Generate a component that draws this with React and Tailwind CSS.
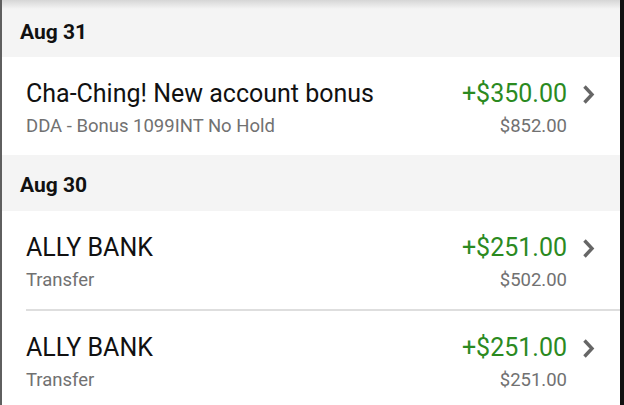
const days = [
  {
    date: "Aug 31",
    items: [
      {
        title: "Cha-Ching! New account bonus",
        sub: "DDA - Bonus 1099INT No Hold",
        amount: "+$350.00",
        balance: "$852.00",
      },
    ],
  },
  {
    date: "Aug 30",
    items: [
      { title: "ALLY BANK", sub: "Transfer", amount: "+$251.00", balance: "$502.00" },
      { title: "ALLY BANK", sub: "Transfer", amount: "+$251.00", balance: "$251.00" },
    ],
  },
];

const Chevron = () => (
  <svg width="13" height="21" viewBox="0 0 13 21" className="shrink-0">
    <path d="M2.5 2.5 L10 10.5 L2.5 18.5" fill="none" stroke="#666" strokeWidth="3.4" />
  </svg>
);

const App = () => {
  return (
    <div
      className="w-[624px] h-[405px] overflow-hidden bg-white border-l-2 border-l-[#5f5f5f] border-r-4 border-r-[#111]"
      style={{ fontFamily: 'Roboto, "Noto Sans", sans-serif' }}
    >
      {days.map((day, di) => (
        <div key={day.date}>
          <div
            className={
              di === 0
                ? "h-[57px] pt-[18px] pl-[18px] bg-[linear-gradient(to_bottom,#d6d6d6,#f4f4f4_9px)]"
                : "h-[56px] pt-[16px] pl-[18px] bg-[#f4f4f4]"
            }
          >
            <p className="text-[21px] leading-[28px] font-bold text-[#111]">{day.date}</p>
          </div>
          {day.items.map((item, i) => (
            <div key={i} className="pl-[24px]">
              {i > 0 && <div className="h-[2px] bg-[#dedede]" />}
              <div className="flex items-start pt-[22px] pb-[17px] pr-[25px]">
                <div className="flex-1">
                  <p className="text-[25px] leading-[30px] text-[#111]">{item.title}</p>
                  <p className="mt-[5px] text-[18.5px] leading-[24px] text-[#717171]">{item.sub}</p>
                </div>
                <div className="text-right">
                  <p className="text-[25px] leading-[30px] text-[#2b8a1f]">{item.amount}</p>
                  <p className="mt-[5px] text-[18.5px] leading-[24px] text-[#717171]">{item.balance}</p>
                </div>
                <div className="ml-[15px] pt-[5px]">
                  <Chevron />
                </div>
              </div>
            </div>
          ))}
        </div>
      ))}
    </div>
  );
};

export default App;
